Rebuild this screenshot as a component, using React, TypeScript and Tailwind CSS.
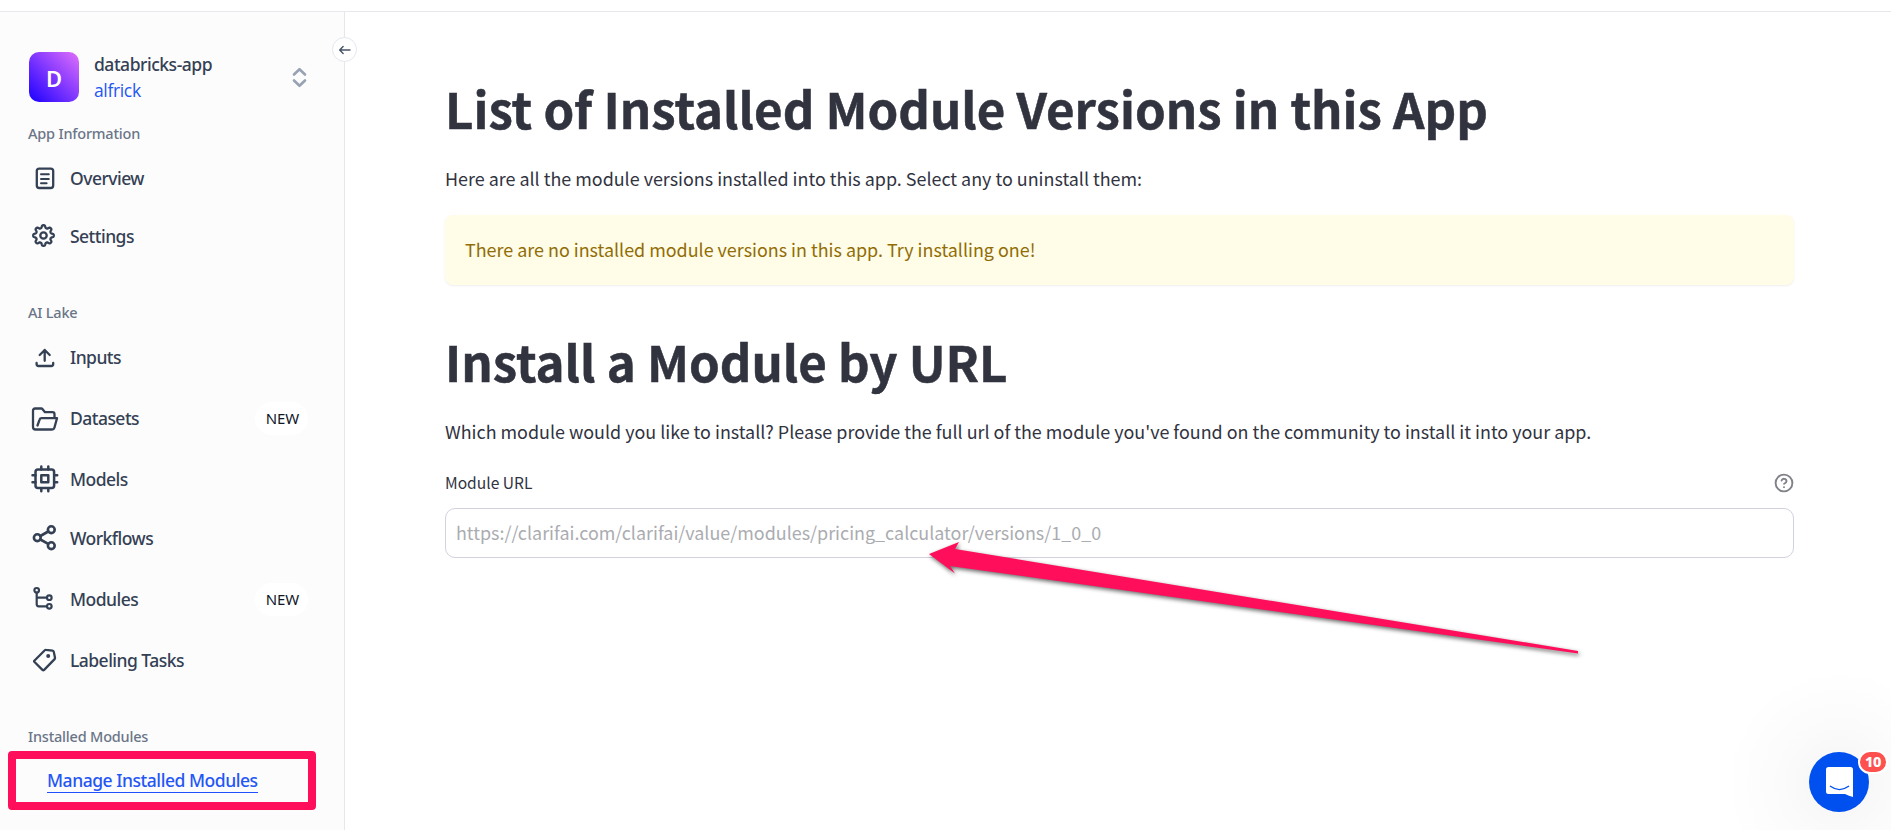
import type { ReactNode } from "react";

const GEAR_PATH = (() => {
  const points: string[] = [];
  for (let i = 0; i < 160; i++) {
    const t = (i / 160) * Math.PI * 2;
    const r = 9 + 1.35 * Math.tanh(1.8 * Math.cos(8 * t));
    points.push(`${(12.5 + r * Math.sin(t)).toFixed(2)} ${(13.5 - r * Math.cos(t)).toFixed(2)}`);
  }
  return `M${points.join("L")}Z`;
})();

function Icon({ children, width = 2.3 }: { children: ReactNode; width?: number }) {
  return (
    <svg
      className="h-7 w-7 shrink-0"
      viewBox="0 0 28 28"
      fill="none"
      stroke="#344054"
      strokeWidth={width}
      strokeLinecap="round"
      strokeLinejoin="round"
    >
      {children}
    </svg>
  );
}

const OverviewIcon = (
  <Icon>
    <rect x="5.8" y="4.6" width="16.4" height="19.4" rx="2.5" />
    <path d="M10 10.2h7.8M10 15h7.8M10 19.3h5.6" strokeWidth="2" />
  </Icon>
);
const SettingsIcon = (
  <Icon>
    <path d={GEAR_PATH} />
    <circle cx="12.5" cy="13.5" r="3.2" />
  </Icon>
);
const InputsIcon = (
  <Icon>
    <path d="M13.700 17.800V7M8.700 12l5-5 5 5M5.600 20v1a2 2 0 0 0 2 2h12.600a2 2 0 0 0 2-2v-1" />
  </Icon>
);
const DatasetsIcon = (
  <Icon>
    <path d="M23.500 13.500V10.200a2 2 0 0 0-2-2H14l-2.600-3.100a1.500 1.500 0 0 0-1.100-.6H4a2 2 0 0 0-2 2V23a2.500 2.500 0 0 0 2.500 2.500H21a2.500 2.500 0 0 0 2.400-1.800L26 14.200H10.500a2 2 0 0 0-1.900 1.400L6.500 21.500" />
  </Icon>
);
const ModelsIcon = (
  <Icon width={2.500}>
    <rect x="4.500" y="4.500" width="18.600" height="18.600" rx="2.500" />
    <rect x="10.300" y="10.300" width="7" height="7" />
    <path d="M10.300 1.500v3M17.300 1.500v3M10.300 23.200v3M17.300 23.200v3M1.500 10.300h3M1.500 17.300h3M23.200 10.300h3M23.200 17.300h3" />
  </Icon>
);
const WorkflowsIcon = (
  <Icon width={2.600}>
    <circle cx="20.300" cy="5.700" r="3.400" />
    <circle cx="6.300" cy="13.700" r="3.400" />
    <circle cx="20.300" cy="21.700" r="3.400" />
    <path d="M9.400 12l7.800-4.500M9.400 15.500l7.800 4.400" />
  </Icon>
);
const ModulesIcon = (
  <Icon width={2.200}>
    <circle cx="5.700" cy="5.300" r="2.300" />
    <circle cx="18.300" cy="12.700" r="2.300" />
    <circle cx="18.300" cy="21.300" r="2.300" />
    <path d="M5.700 7.700v11.600a2 2 0 0 0 2 2h8.200M5.700 12.700h10.200" />
  </Icon>
);
const LabelingIcon = (
  <Icon>
    <path d="M3.300 14.800 13.800 4.300a1.500 1.500 0 0 1 1.300-.4l6.400.8a1.500 1.500 0 0 1 1.300 1.200l1.200 5.900a1.500 1.500 0 0 1-.4 1.300L12.900 24.100a.8.8 0 0 1-1.200 0l-8.400-8.300a.7.7 0 0 1 0-1z" />
    <circle cx="17.200" cy="9.900" r="2" fill="#344054" stroke="none" />
  </Icon>
);

function GroupTitle({ children, className = "" }: { children: ReactNode; className?: string }) {
  return (
    <h2 className={`ml-7 h-6 text-[14.5px] leading-6 font-medium tracking-[-0.2px] text-[#6b7588] ${className}`}>
      {children}
    </h2>
  );
}

function NavItem({
  icon,
  label,
  isNew,
  className = "",
}: {
  icon: ReactNode;
  label: string;
  isNew?: boolean;
  className?: string;
}) {
  return (
    <a className={`flex h-12 items-center pr-9 pl-[31px] ${className}`}>
      {icon}
      <span className="ml-[11px] text-[17.5px] leading-6 font-medium tracking-[-0.53px] text-[#344054]">{label}</span>
      {isNew && (
        <span className="ml-auto flex h-[33px] w-[53px] items-center justify-center rounded-full bg-white pl-0.5 text-[15px] tracking-[-0.1px] text-[#101828]">
          NEW
        </span>
      )}
    </a>
  );
}

function Sidebar() {
  return (
    <aside className="relative h-full w-[345px] shrink-0 border-r border-[#e5e7eb] bg-[#fcfcfc]">
      <div className="flex h-[109px] items-start pt-10 pr-[37px] pl-[29px]">
        <div className="flex h-[50px] w-[50px] items-center justify-center rounded-[10px] bg-[linear-gradient(45deg,#1a00ff_0%,#8a3cff_55%,#e070fa_100%)] pt-0.5 text-[22px] font-semibold text-white">
          D
        </div>
        <div className="-mt-px ml-[15px] text-[17.5px]">
          <div className="leading-[26px] font-medium tracking-[-0.48px] text-[#344054]">databricks-app</div>
          <div className="font-['Open_Sans',sans-serif] leading-[26px] tracking-[-0.35px] text-[#2456f5]">alfrick</div>
        </div>
        <svg className="mt-[15px] ml-auto h-[22px] w-[15px]" viewBox="0 0 15 22" fill="none" stroke="#98a2b3" strokeWidth="2.600" strokeLinecap="round" strokeLinejoin="round">
          <path d="M2 7.500 7.500 2.200 13 7.500M2 13.500l5.500 5.300 5.500-5.300" />
        </svg>
      </div>
      <button className="absolute top-[25px] -right-[13px] flex h-[25px] w-[25px] items-center justify-center rounded-full border border-[#e4e7ec] bg-white">
        <svg className="h-3 w-3" viewBox="0 0 12 12" fill="none" stroke="#475467" strokeWidth="1.400" strokeLinecap="round" strokeLinejoin="round">
          <path d="M11 6H.8M4.100 2.500.7 6l3.400 3.500" />
        </svg>
      </button>

      <GroupTitle>App Information</GroupTitle>
      <NavItem className="mt-[9px]" icon={OverviewIcon} label="Overview" />
      <NavItem className="mt-2.5" icon={SettingsIcon} label="Settings" />

      <GroupTitle className="mt-10">AI Lake</GroupTitle>
      <NavItem className="mt-[9px]" icon={InputsIcon} label="Inputs" />
      <NavItem className="mt-[13px]" icon={DatasetsIcon} label="Datasets" isNew />
      <NavItem className="mt-[13px]" icon={ModelsIcon} label="Models" />
      <NavItem className="mt-[11px]" icon={WorkflowsIcon} label="Workflows" />
      <NavItem className="mt-[13px]" icon={ModulesIcon} label="Modules" isNew />
      <NavItem className="mt-[13px]" icon={LabelingIcon} label="Labeling Tasks" />

      <GroupTitle className="mt-10">Installed Modules</GroupTitle>
      <div className="mt-[3px] ml-2 flex h-[59px] w-[308px] rounded-[4px] border-8 border-[#ff0f5b] pt-[9px] pl-[31px]">
        <a className="h-[25px] border-b border-[#1f4fff] text-[17.5px] leading-6 font-medium tracking-[-0.46px] whitespace-nowrap text-[#2456f5]">
          Manage Installed Modules
        </a>
      </div>
    </aside>
  );
}

function Title({ children, className = "" }: { children: ReactNode; className?: string }) {
  return (
    <h1 className={`h-[66px] text-[49.2px] leading-[66px] font-bold whitespace-nowrap text-[#31333f] [-webkit-text-stroke:0.5px_#31333f] ${className}`}>
      {children}
    </h1>
  );
}

function ChatLauncher() {
  return (
    <div className="absolute right-0 bottom-0 h-[163px] w-[167px] overflow-hidden">
      <div className="absolute top-0 left-0 h-[230px] w-[230px] rounded-full bg-[radial-gradient(closest-side,rgba(0,0,0,0.045),rgba(0,0,0,0.016)_50%,transparent)]" />
      <div className="absolute top-[85px] left-[85px] flex h-[60px] w-[60px] items-center justify-center rounded-full bg-[#0050f0]">
        <svg className="h-[30px] w-[27px]" viewBox="0 0 27 30">
          <path d="M2.500 0h22A2.500 2.500 0 0 1 27 2.500V30q-4-1-8-3H2.500A2.500 2.500 0 0 1 0 24.500v-22A2.500 2.500 0 0 1 2.500 0z" fill="#fff" />
          <path d="M4.400 19.300q9.100 6.600 18.200 0" fill="none" stroke="#0050f0" strokeWidth="1.400" strokeLinecap="round" />
        </svg>
      </div>
      <span className="absolute top-[83px] left-[134px] flex h-6 w-[30px] items-center justify-center rounded-full border-2 border-white bg-[#ff5050] text-[14.5px] font-extrabold tracking-[-0.5px] text-white">
        10
      </span>
    </div>
  );
}

export default function App() {
  return (
    <div className="relative flex h-[830px] w-full flex-col overflow-hidden bg-white font-['Noto_Sans',sans-serif]">
      <header className="h-3 shrink-0 border-b border-[#e5e7eb] bg-white" />
      <div className="flex min-h-0 flex-1">
        <Sidebar />
        <main className="flex-1 pt-[63px] pr-[97px] pl-[100px] font-['Noto_Sans_CJK_JP',sans-serif] text-[17.92px] text-[#31333f]">
          <Title>List of Installed Module Versions in this App</Title>
          <p className="mt-[21px] leading-8">Here are all the module versions installed into this app. Select any to uninstall them:</p>
          <div className="mt-[21px] flex h-[70px] items-center rounded-lg bg-[#fffce7] pb-0.5 pl-5 text-[#926c05] shadow-[0_1px_2px_rgba(49,51,63,0.08)]">
            There are no installed module versions in this app. Try installing one!
          </div>
          <Title className="mt-[43px]">Install a Module by URL</Title>
          <p className="mt-[21px] leading-8">
            Which module would you like to install? Please provide the full url of the module you've found on the community to install it into your app.
          </p>
          <div className="mt-6 flex h-6 items-center justify-between text-[15.6px]">
            <label className="pb-0.5 leading-6">Module URL</label>
            <svg className="h-5 w-5" viewBox="0 0 20 20" fill="none" stroke="#808289" strokeWidth="1.900" strokeLinecap="round" strokeLinejoin="round">
              <circle cx="10" cy="10" r="8.400" />
              <path d="M7.600 7.600a2.500 2.500 0 0 1 4.900.7c0 1.600-2.400 2.300-2.400 2.500M10 14.100v.05" />
            </svg>
          </div>
          <div className="mt-[13px] flex h-[50px] items-center rounded-[10px] border border-[#d1d2de] bg-white pb-0.5 pl-2.5 text-[#abacb1]">
            https://clarifai.com/clarifai/value/modules/pricing_calculator/versions/1_0_0
          </div>
        </main>
      </div>
      <svg className="absolute top-[530px] left-[920px] h-[140px] w-[680px] drop-shadow-[1px_2px_2px_rgba(0,0,0,0.6)]" viewBox="920 530 680 140">
        <path d="M929 554 959 542 955 549 1578 651 1578 653.500 950 566 955 573.500z" fill="#ff0f5b" />
      </svg>
      <ChatLauncher />
    </div>
  );
}
